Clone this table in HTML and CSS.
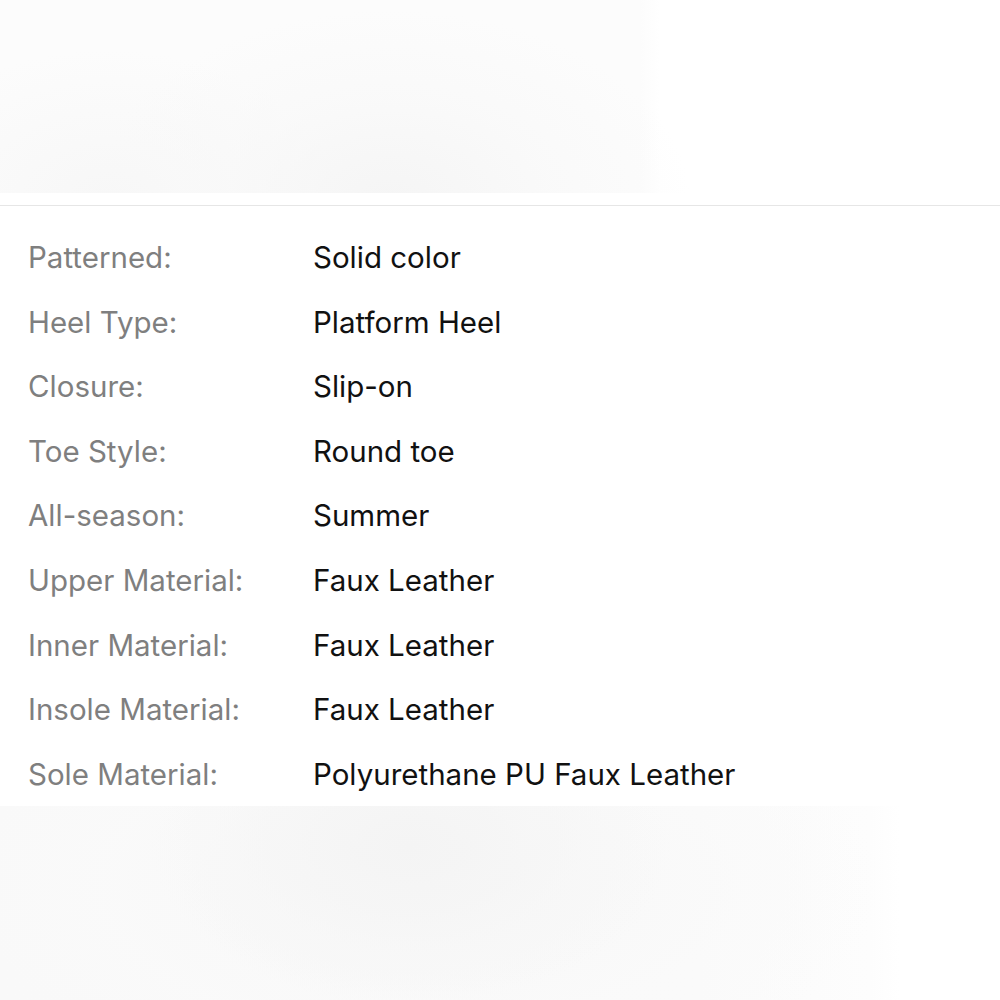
FILE: index.html
```html
<!doctype html>
<html lang="en">
<head>

<meta charset="utf-8">

<title>Product Details</title>

<link rel="stylesheet" href="styles.css">

</head>
<body>

<div class="photo photo--top"></div>

<div class="specs">
	<ul>
		<li><span class="label">Patterned:</span><span class="value">Solid color</span></li>
		<li><span class="label">Heel Type:</span><span class="value">Platform Heel</span></li>
		<li><span class="label">Closure:</span><span class="value">Slip-on</span></li>
		<li><span class="label">Toe Style:</span><span class="value">Round toe</span></li>
		<li><span class="label">All-season:</span><span class="value">Summer</span></li>
		<li><span class="label">Upper Material:</span><span class="value">Faux Leather</span></li>
		<li><span class="label">Inner Material:</span><span class="value">Faux Leather</span></li>
		<li><span class="label">Insole Material:</span><span class="value">Faux Leather</span></li>
		<li><span class="label">Sole Material:</span><span class="value">Polyurethane PU Faux Leather</span></li>
	</ul>
</div>

<div class="photo photo--bottom"></div>

</body>
</html>
```

FILE: styles.css
```css
html, body {
	margin: 0;
	padding: 0;
	background: #fff;
}

body {
	font-family: Inter, "Noto Sans", sans-serif;
	font-size: 29.5px;
	overflow: hidden;
}

.photo--top {
	height: 193px;
	background:
		radial-gradient(ellipse 300px 190px at 390px 200px, #f5f5f5 0%, rgba(248, 248, 248, 0.6) 55%, rgba(255, 255, 255, 0) 100%),
		radial-gradient(ellipse 230px 150px at 110px 200px, #f7f7f7 0%, rgba(250, 250, 250, 0) 100%),
		linear-gradient(to right, #fcfcfc 0, #fcfcfc 640px, #fff 660px);
}

.specs {
	margin-top: 12px;
	border-top: 1px solid #e6e6e6;
	padding-top: 19px;
}

ul {
	margin: 0;
	padding: 0;
	list-style: none;
}

li {
	display: flex;
	height: 64.6px;
	line-height: 65px;
	padding-left: 28px;
	white-space: nowrap;
}

.label {
	width: 285px;
	color: #7f7f7f;
}

.value {
	color: #111;
}

.photo--bottom {
	height: 200px;
	background:
		radial-gradient(ellipse 260px 160px at 410px 40px, #f4f4f4 0%, rgba(246, 246, 246, 0.6) 60%, rgba(255, 255, 255, 0) 100%),
		radial-gradient(ellipse 460px 210px at 420px 80px, #f7f7f7 0%, rgba(250, 250, 250, 0.7) 70%, rgba(255, 255, 255, 0) 100%),
		linear-gradient(to right, #f9f9f9 0, #fafafa 700px, #fdfdfd 870px, #fff 900px);
}
```
